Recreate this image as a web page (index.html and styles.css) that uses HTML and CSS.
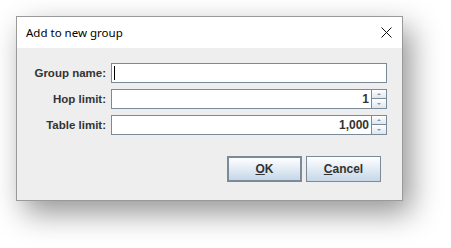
FILE: index.html
```html
<!DOCTYPE html>
<html lang="en">
<head>
  <meta charset="UTF-8">
  <title>Add to new group</title>
  <link rel="stylesheet" href="styles.css">
</head>
<body>
  <div class="dialog">
    <div class="titlebar">
      <span class="title">Add to new group</span>
      <svg class="close" width="11" height="11" viewBox="0 0 11 11">
        <path d="M0.5 0.5 L10.5 10.5 M10.5 0.5 L0.5 10.5" stroke="#111" stroke-width="1" fill="none"/>
      </svg>
    </div>

    <div class="content">
      <div class="form">
        <label>Group name:</label>
        <div class="field"><span class="caret"></span></div>

        <label>Hop limit:</label>
        <div class="spinner">
          <div class="field num">1</div>
          <div class="arrows">
            <div class="arrow up"></div>
            <div class="arrow down"></div>
          </div>
        </div>

        <label>Table limit:</label>
        <div class="spinner">
          <div class="field num">1,000</div>
          <div class="arrows">
            <div class="arrow up"></div>
            <div class="arrow down"></div>
          </div>
        </div>
      </div>

      <div class="actions">
        <button class="btn default"><u>O</u>K</button>
        <button class="btn"><u>C</u>ancel</button>
      </div>
    </div>
  </div>
</body>
</html>
```

FILE: styles.css
```css
body {
  margin: 0;
  padding: 16px;
  min-height: 248px;
  box-sizing: border-box;
  background: #fff;
  font-family: "Liberation Sans", Arial, sans-serif;
}
.dialog {
  width: 385px;
  border: 1px solid #9a9a9a;
  background: #eeeeee;
  box-shadow: 8px 12px 28px rgba(0, 0, 0, 0.42);
}
.titlebar {
  display: flex;
  align-items: center;
  justify-content: space-between;
  height: 31px;
  padding: 0 10px 0 9px;
  background: #fff;
}
.title {
  font-family: "Noto Sans", "Open Sans", sans-serif;
  font-size: 11.5px;
  color: #000;
}
.content {
  padding: 15px 15px 18px 0;
}
.form {
  display: grid;
  grid-template-columns: 89px 1fr;
  column-gap: 5px;
  row-gap: 6px;
  align-items: center;
}
label {
  text-align: right;
  font-weight: bold;
  font-size: 11.5px;
  color: #333;
}
.field {
  box-sizing: border-box;
  height: 20px;
  border: 1px solid #7a8a99;
  background: #fff;
  display: flex;
  align-items: center;
  padding: 0 2px;
  font-weight: bold;
  font-size: 12px;
  color: #333;
}
.caret {
  width: 1px;
  height: 14px;
  background: #000;
}
.spinner {
  display: flex;
}
.spinner .field {
  flex: 1;
}
.num {
  justify-content: flex-end;
}
.arrows {
  display: flex;
  flex-direction: column;
  width: 16px;
  margin-left: -1px;
}
.arrow {
  box-sizing: border-box;
  height: 10px;
  border: 1px solid #7a8a99;
  background: linear-gradient(#ffffff, #dde6ef);
  display: flex;
  align-items: center;
  justify-content: center;
}
.arrow.down {
  border-top: none;
}
.arrow::after {
  content: "";
  width: 0;
  height: 0;
  border-left: 2px solid transparent;
  border-right: 2px solid transparent;
}
.arrow.up::after {
  border-bottom: 2px solid #8894a0;
}
.arrow.down::after {
  border-top: 2px solid #8894a0;
}
.actions {
  display: flex;
  justify-content: flex-end;
  gap: 4px;
  margin-top: 21px;
  padding-right: 6px;
}
.btn {
  box-sizing: border-box;
  width: 75px;
  height: 26px;
  border: 1px solid #7a8a99;
  background: linear-gradient(#ffffff, #e4edf6 45%, #c6d7e8);
  font-family: "Liberation Sans", Arial, sans-serif;
  font-weight: bold;
  font-size: 12px;
  color: #333;
  padding: 0;
}
.btn.default {
  border: 2px solid #7a8a99;
}
```
